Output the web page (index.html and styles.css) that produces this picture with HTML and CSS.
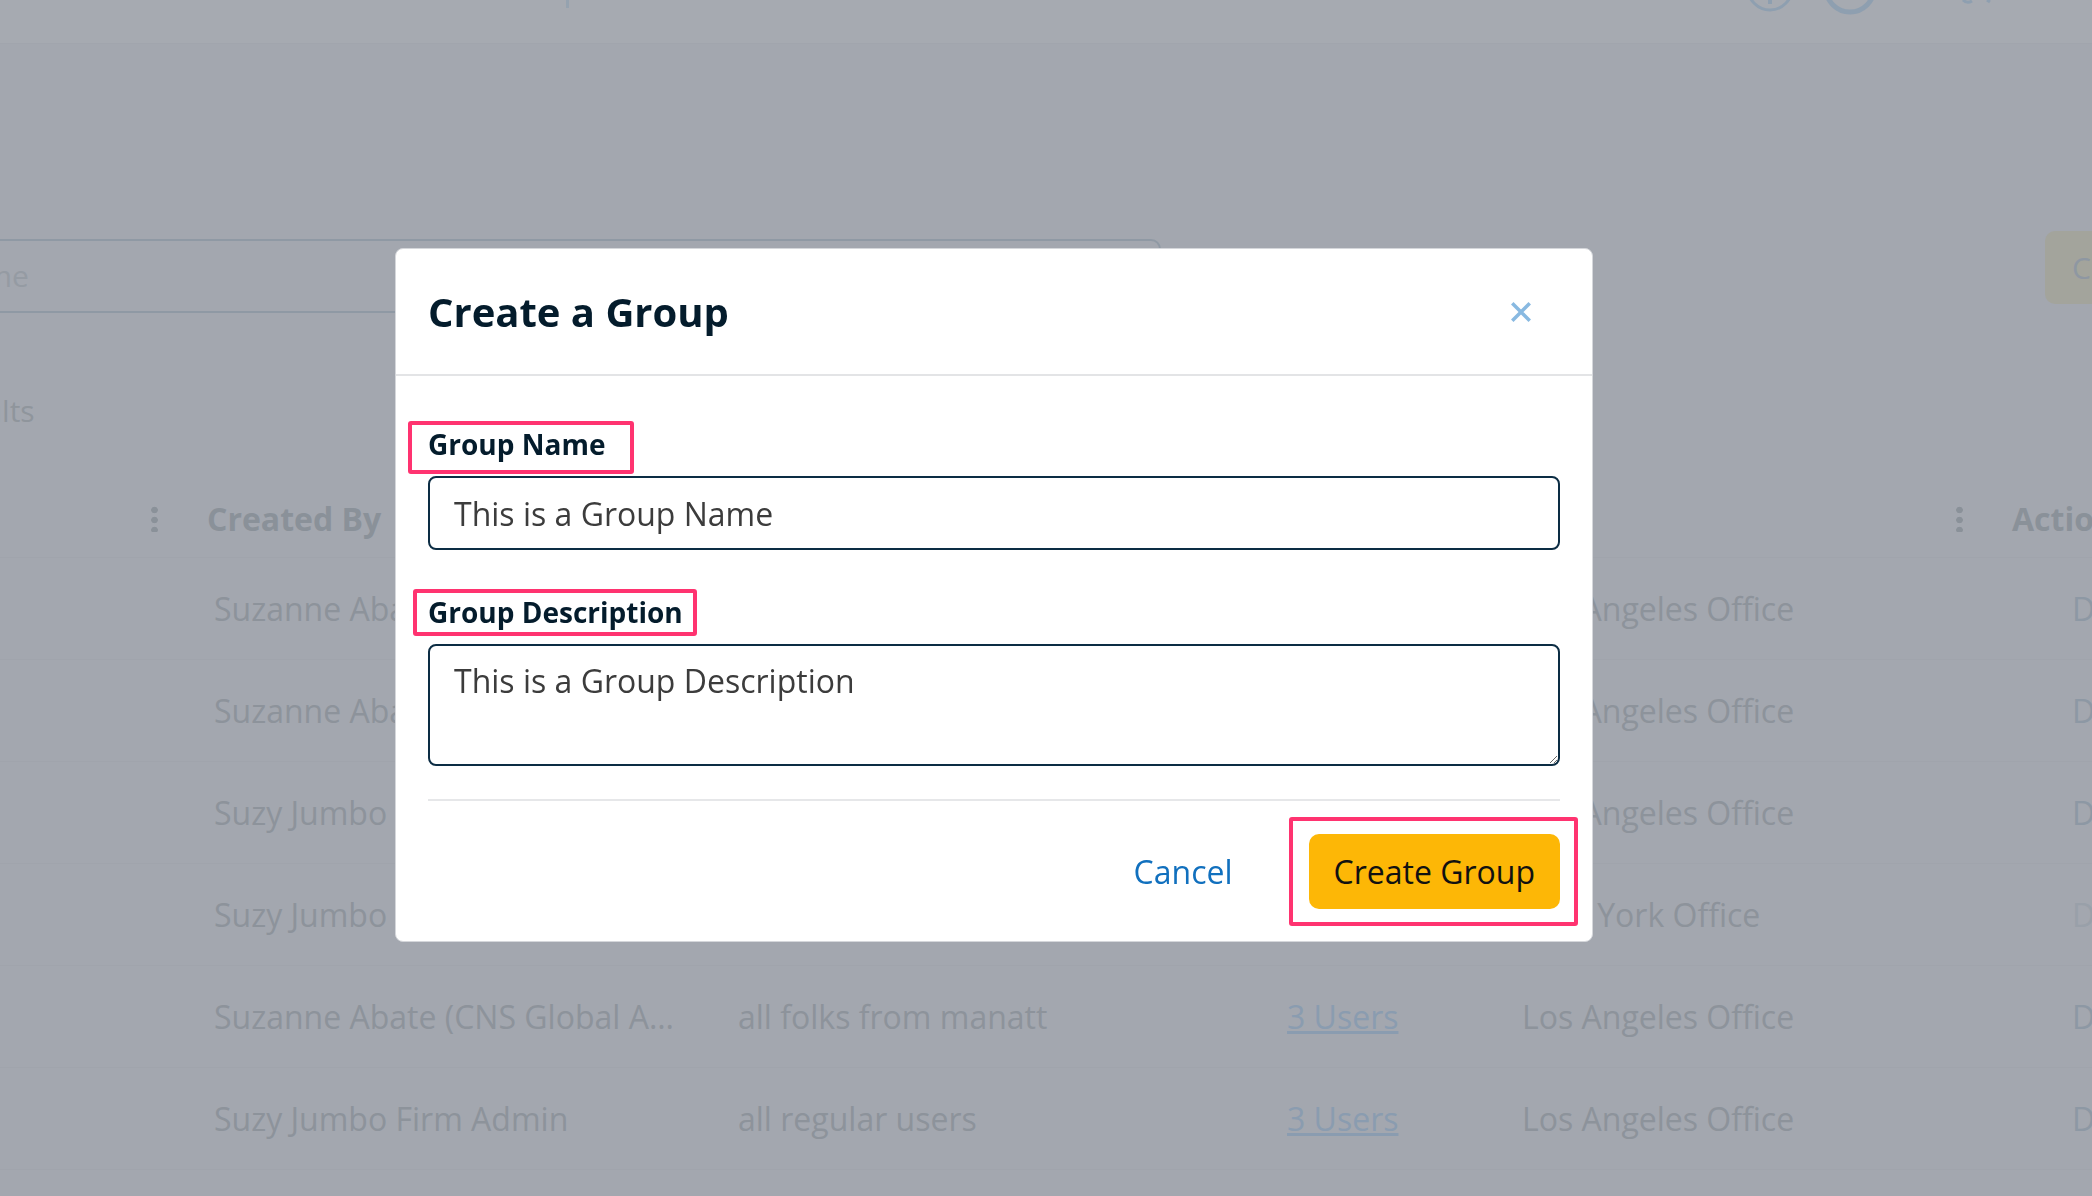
FILE: index.html
```html
<!DOCTYPE html>
<html lang="en">
<head>
    <meta charset="UTF-8">
    <meta name="viewport" content="width=device-width, initial-scale=1.0">
    <title>Groups</title>

    <link rel="stylesheet" href="styles.css">
</head>
<body>
    <!-- page behind the dialog -->
    <div class="page">
        <header class="topbar">
            <span class="topbar-mark"></span>
            <svg class="topbar-icons" width="260" height="43" viewBox="0 0 260 43">
                <circle cx="35" cy="-12" r="22" fill="none" stroke="#8e9fb0" stroke-width="3"/>
                <line x1="35" y1="-4" x2="35" y2="4" stroke="#8e9fb0" stroke-width="4"/>
                <circle cx="115" cy="-12" r="24" fill="none" stroke="#8e9fb0" stroke-width="5"/>
                <path d="M228 0 q4 4 9 1 M252 0 l3 2" fill="none" stroke="#8e9fb0" stroke-width="3"/>
            </svg>
        </header>

        <main class="content">
            <div class="search-row">
                <div class="search-input">Name</div>
                <div class="search-btn">Create</div>
            </div>

            <div class="results">Results</div>

            <div class="table">
                <div class="row row-head">
                    <div class="cell head"><span></span><span class="kebab"></span></div>
                    <div class="cell head"><span class="head-label">Created By</span><span class="kebab"></span></div>
                    <div class="cell head"><span class="head-label">Description</span><span class="kebab"></span></div>
                    <div class="cell head"><span class="head-label">Users</span><span class="kebab"></span></div>
                    <div class="cell head"><span class="head-label"></span><span class="kebab"></span></div>
                    <div class="cell head"><span class="head-label">Actions</span></div>
                </div>
                <div class="row">
                    <div class="cell"></div>
                    <div class="cell">Suzanne Abate (CNS Global A…</div>
                    <div class="cell">all folks from manatt</div>
                    <div class="cell"><a href="#">3 Users</a></div>
                    <div class="cell">Los Angeles Office</div>
                    <div class="cell action">Delete</div>
                </div>
                <div class="row">
                    <div class="cell"></div>
                    <div class="cell">Suzanne Abate (CNS Global A…</div>
                    <div class="cell">all regular users</div>
                    <div class="cell"><a href="#">3 Users</a></div>
                    <div class="cell">Los Angeles Office</div>
                    <div class="cell action">Delete</div>
                </div>
                <div class="row">
                    <div class="cell"></div>
                    <div class="cell">Suzy Jumbo Firm Admin</div>
                    <div class="cell">all folks from manatt</div>
                    <div class="cell"><a href="#">3 Users</a></div>
                    <div class="cell">Los Angeles Office</div>
                    <div class="cell action">Delete</div>
                </div>
                <div class="row">
                    <div class="cell"></div>
                    <div class="cell">Suzy Jumbo Firm Admin</div>
                    <div class="cell">all regular users</div>
                    <div class="cell"><a href="#">3 Users</a></div>
                    <div class="cell">New York Office</div>
                    <div class="cell action faint">Delete</div>
                </div>
                <div class="row">
                    <div class="cell"></div>
                    <div class="cell">Suzanne Abate (CNS Global A…</div>
                    <div class="cell">all folks from manatt</div>
                    <div class="cell"><a href="#">3 Users</a></div>
                    <div class="cell">Los Angeles Office</div>
                    <div class="cell action">Delete</div>
                </div>
                <div class="row">
                    <div class="cell"></div>
                    <div class="cell">Suzy Jumbo Firm Admin</div>
                    <div class="cell">all regular users</div>
                    <div class="cell"><a href="#">3 Users</a></div>
                    <div class="cell">Los Angeles Office</div>
                    <div class="cell action">Delete</div>
                </div>
            </div>
        </main>
    </div>

    <!-- dialog -->
    <div class="backdrop">
        <div class="modal" role="dialog" aria-labelledby="modal-title">
            <div class="modal-header">
                <h2 id="modal-title" class="modal-title">Create a Group</h2>
                <button class="modal-close" type="button" aria-label="Close">
                    <svg width="20" height="20" viewBox="0 0 20 20">
                        <path d="M2.5 2.5 L17.5 17.5 M17.5 2.5 L2.5 17.5" stroke="#88b9e1" stroke-width="3.5" stroke-linecap="square"/>
                    </svg>
                </button>
            </div>

            <form class="modal-body">
                <div class="field">
                    <label class="field-label mark mark-name" for="group-name">Group Name</label>
                    <input id="group-name" class="field-input" type="text" value="This is a Group Name">
                </div>
                <div class="field">
                    <label class="field-label mark mark-desc" for="group-desc">Group Description</label>
                    <textarea id="group-desc" class="field-input field-textarea">This is a Group Description</textarea>
                </div>
            </form>

            <div class="modal-footer">
                <button class="btn-link" type="button">Cancel</button>
                <span class="mark mark-btn">
                    <button class="btn-primary" type="button">Create Group</button>
                </span>
            </div>
        </div>
    </div>
</body>
</html>
```

FILE: styles.css
```css
/* base */
body {
    margin: 0;
    font-family: "Open Sans", "Noto Sans", sans-serif;
    background-color: #a3a7af;
    color: #8d939b;
    overflow: hidden;
}

.page {
    width: 2164px;
    height: 1196px;
    margin-left: -72px;
    overflow: hidden;
}

.topbar {
    height: 43px;
    background-color: #a6aab1;
    border-bottom: 1px solid #a1a5ad;
    display: flex;
    align-items: flex-start;
}

.topbar-mark {
    width: 3px;
    height: 8px;
    margin-left: 638px;
    background-color: #95a2af;
}

.topbar-icons {
    margin-left: auto;
    margin-right: 97px;
}

.search-row {
    display: flex;
    align-items: flex-start;
    margin-top: 187px;
}

.search-input {
    flex-shrink: 0;
    box-sizing: border-box;
    width: 1233px;
    height: 74px;
    margin-top: 8px;
    padding: 0 15px;
    border: 2px solid #8f99a4;
    border-radius: 10px;
    font-size: 30px;
    line-height: 70px;
    color: #959ba3;
}

.search-btn {
    flex-shrink: 0;
    width: 200px;
    height: 73px;
    margin-left: 884px;
    padding-left: 27px;
    border-radius: 10px;
    background-color: #a3a49c;
    font-size: 30px;
    line-height: 73px;
    color: #8e97a2;
}

.results {
    margin-top: 77px;
    margin-left: 6px;
    font-size: 30px;
    line-height: 42px;
    color: #8f959c;
}

/* table */
.table {
    margin-top: 47px;
}

.row {
    display: grid;
    grid-template-columns: 286px 524px 549px 235px 497px 180px;
    height: 101px;
    align-items: center;
    border-bottom: 1px solid #a0a4ac;
    font-size: 32px;
    white-space: nowrap;
}

.row-head {
    height: 78px;
}

.cell a {
    color: #8a9cb0;
}

.head {
    display: flex;
    align-items: center;
    justify-content: space-between;
    padding-right: 56px;
    font-size: 32px;
    font-weight: 700;
    color: #8a9199;
}

.head-label {
    margin-left: -7px;
}

.kebab {
    width: 7px;
    height: 27px;
    background: radial-gradient(circle, #8a9199 3px, transparent 3.6px) 0 0 / 7px 10px repeat-y;
}

.action {
    padding-left: 53px;
    color: #8d98a4;
}

.faint {
    color: #99a0a9;
}

/* dialog */
.backdrop {
    position: fixed;
    inset: 0;
    display: flex;
    align-items: center;
    justify-content: center;
    padding: 0 104px 6px 0;
}

.modal {
    box-sizing: border-box;
    width: 1198px;
    background-color: #fff;
    border: 1px solid #d5d7db;
    border-radius: 8px;
}

.modal-header {
    display: flex;
    align-items: center;
    justify-content: space-between;
    height: 125px;
    padding: 0 47px 0 32px;
    border-bottom: 2px solid #e3e4e6;
}

.modal-title {
    margin: 0;
    font-size: 40px;
    line-height: 56px;
    font-weight: 700;
    color: #041c2c;
}

.modal-close {
    width: 48px;
    height: 48px;
    padding: 0;
    border: none;
    background: none;
    display: flex;
    align-items: center;
    justify-content: center;
    cursor: pointer;
}

.modal-body {
    margin: 0;
    padding: 49px 32px 0;
}

.field + .field {
    margin-top: 43px;
}

.field-label {
    display: inline-block;
    margin-bottom: 12px;
    font-size: 28px;
    line-height: 39px;
    font-weight: 700;
    color: #041c2c;
}

.field-input {
    display: block;
    box-sizing: border-box;
    width: 100%;
    height: 74px;
    margin: 0;
    padding: 14px 24px;
    border: 2px solid #0c2d44;
    border-radius: 8px;
    font-family: inherit;
    font-size: 32px;
    line-height: 42px;
    color: #3c3c3c;
    background-color: #fff;
}

.field-textarea {
    height: 122px;
    resize: vertical;
}

.modal-footer {
    display: flex;
    align-items: center;
    justify-content: flex-end;
    gap: 76px;
    margin: 33px 32px 0;
    padding: 33px 0 32px;
    border-top: 2px solid #e6e7e9;
}

.btn-link {
    padding: 0;
    border: none;
    background: none;
    font-family: inherit;
    font-size: 32px;
    line-height: 42px;
    color: #1170be;
    cursor: pointer;
}

.btn-primary {
    display: block;
    height: 75px;
    padding: 0 25px;
    border: none;
    border-radius: 10px;
    background-color: #fdb706;
    font-family: inherit;
    font-size: 32px;
    color: #111;
    cursor: pointer;
}

/* pink annotation boxes drawn over the screenshot */
.mark {
    position: relative;
}

.mark::after {
    content: "";
    position: absolute;
    border: 4px solid #ff3370;
    border-radius: 3px;
    pointer-events: none;
}

.mark-name::after {
    top: -4px;
    left: -20px;
    right: -29px;
    bottom: -10px;
}

.mark-desc::after {
    top: -4px;
    left: -15px;
    right: -14px;
    bottom: -4px;
}

.mark-btn {
    display: block;
}

.mark-btn::after {
    top: -17px;
    left: -20px;
    right: -18px;
    bottom: -17px;
}
```
